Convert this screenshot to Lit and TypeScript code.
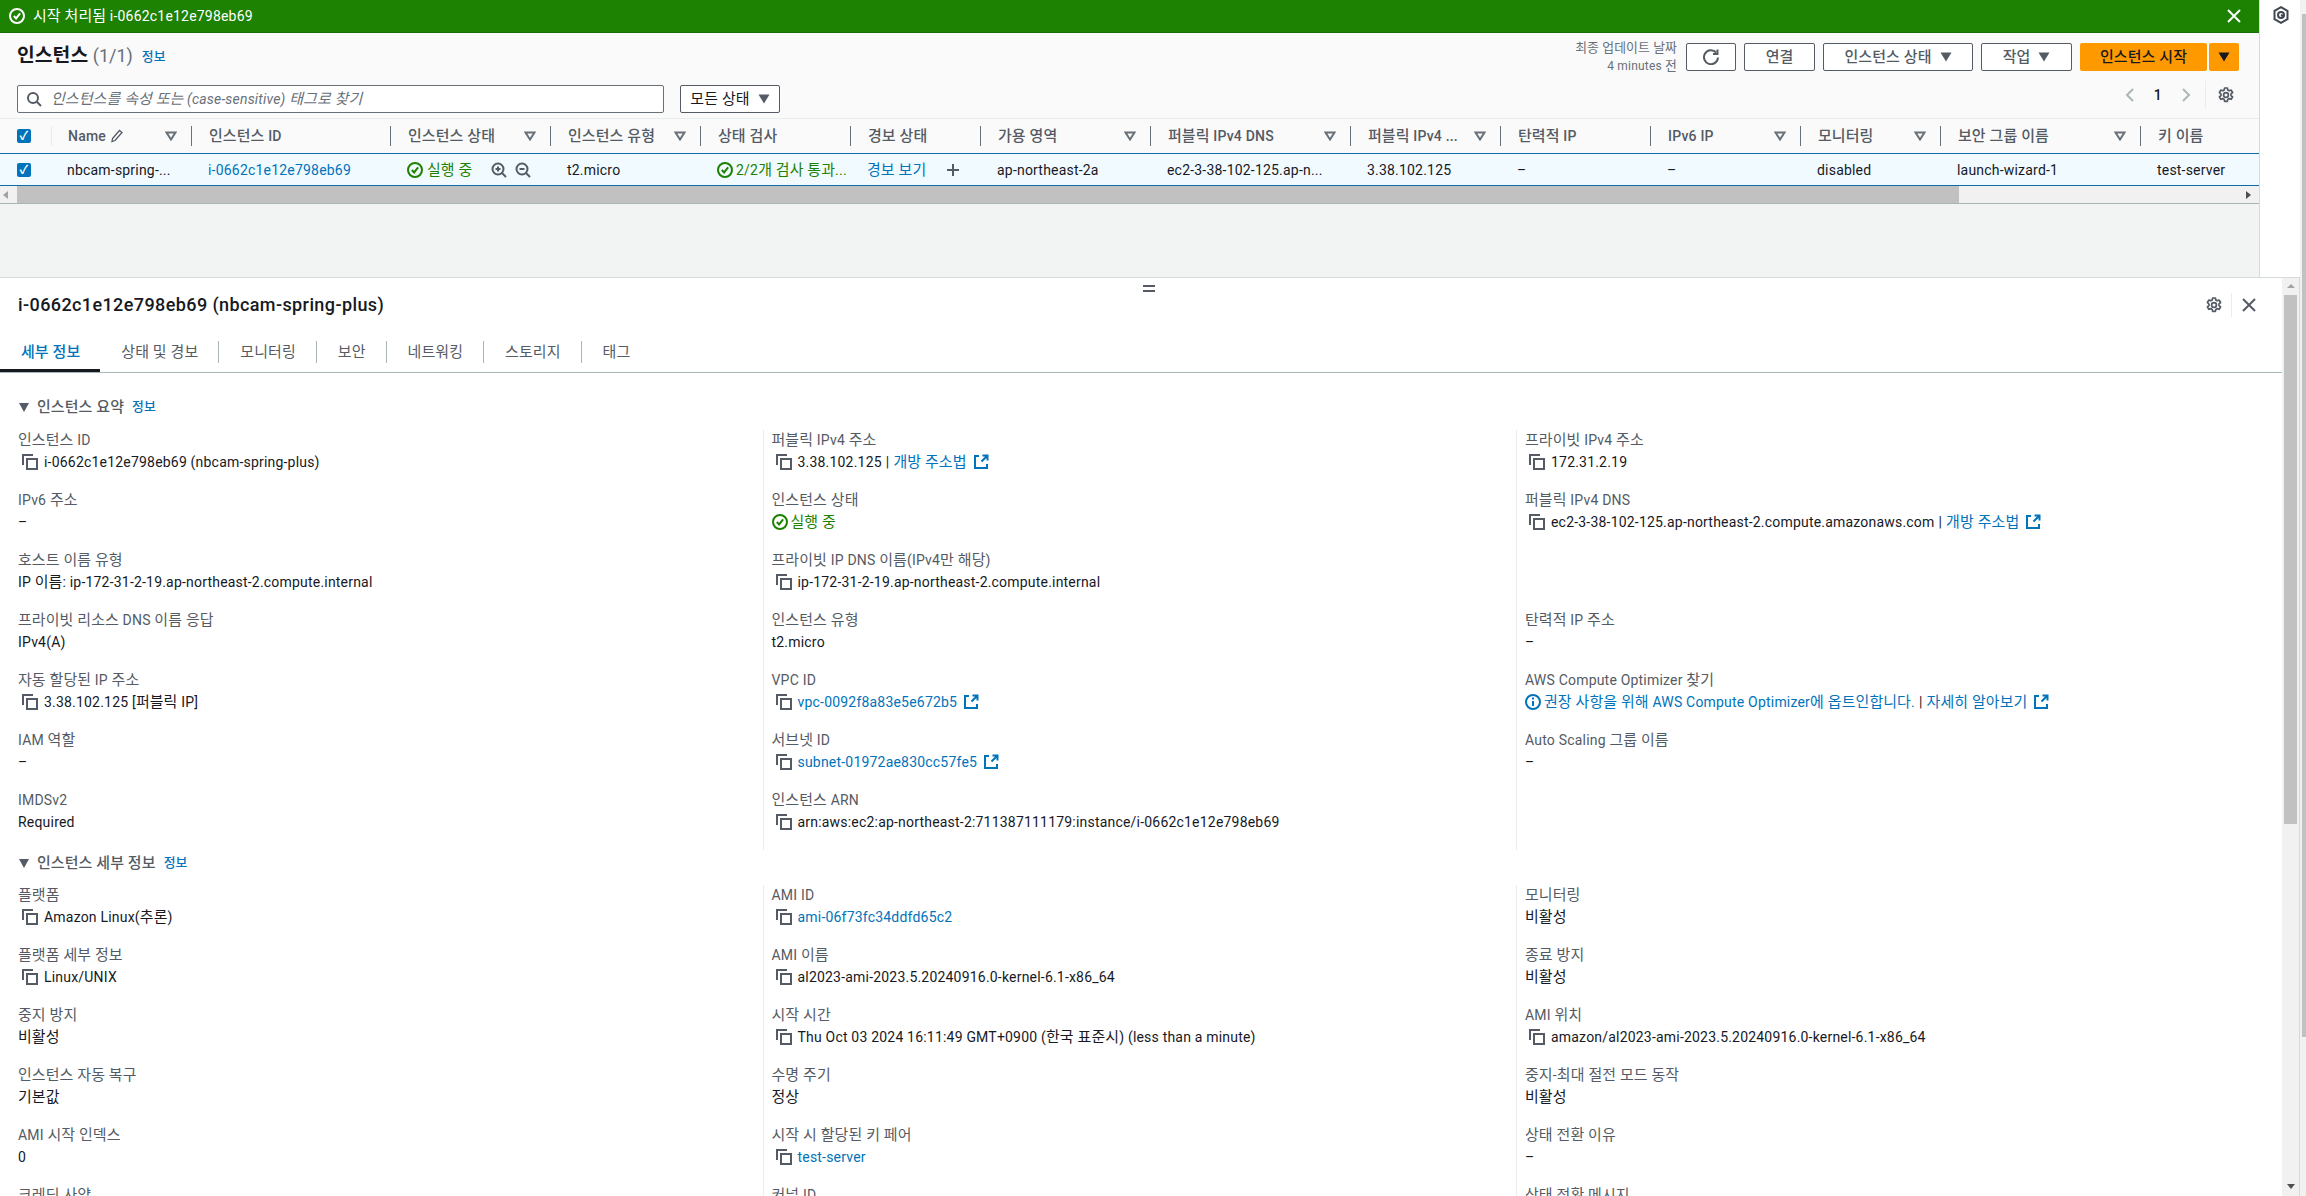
import { LitElement, css, html, svg } from 'lit'
import { customElement } from 'lit/decorators.js'

type Item = { label: string; value?: string; kind?: string; link?: boolean; copy?: boolean; ext?: boolean }

// one column of key/value pairs per entry
const SUMMARY: Item[][] = [
  [
    { label: '인스턴스 ID', value: 'i-0662c1e12e798eb69 (nbcam-spring-plus)', copy: true },
    { label: 'IPv6 주소', value: '–' },
    { label: '호스트 이름 유형', value: 'IP 이름: ip-172-31-2-19.ap-northeast-2.compute.internal' },
    { label: '프라이빗 리소스 DNS 이름 응답', value: 'IPv4(A)' },
    { label: '자동 할당된 IP 주소', value: '3.38.102.125 [퍼블릭 IP]', copy: true },
    { label: 'IAM 역할', value: '–' },
    { label: 'IMDSv2', value: 'Required' },
  ],
  [
    { label: '퍼블릭 IPv4 주소', value: '3.38.102.125', copy: true, kind: 'open' },
    { label: '인스턴스 상태', kind: 'running' },
    { label: '프라이빗 IP DNS 이름(IPv4만 해당)', value: 'ip-172-31-2-19.ap-northeast-2.compute.internal', copy: true },
    { label: '인스턴스 유형', value: 't2.micro' },
    { label: 'VPC ID', value: 'vpc-0092f8a83e5e672b5', copy: true, link: true, ext: true },
    { label: '서브넷 ID', value: 'subnet-01972ae830cc57fe5', copy: true, link: true, ext: true },
    { label: '인스턴스 ARN', value: 'arn:aws:ec2:ap-northeast-2:711387111179:instance/i-0662c1e12e798eb69', copy: true },
  ],
  [
    { label: '프라이빗 IPv4 주소', value: '172.31.2.19', copy: true },
    { label: '퍼블릭 IPv4 DNS', value: 'ec2-3-38-102-125.ap-northeast-2.compute.amazonaws.com', copy: true, kind: 'open' },
    { label: '' },
    { label: '탄력적 IP 주소', value: '–' },
    { label: 'AWS Compute Optimizer 찾기', kind: 'optimizer' },
    { label: 'Auto Scaling 그룹 이름', value: '–' },
  ],
]

const DETAILS: Item[][] = [
  [
    { label: '플랫폼', value: 'Amazon Linux(추론)', copy: true },
    { label: '플랫폼 세부 정보', value: 'Linux/UNIX', copy: true },
    { label: '중지 방지', value: '비활성' },
    { label: '인스턴스 자동 복구', value: '기본값' },
    { label: 'AMI 시작 인덱스', value: '0' },
    { label: '크레딧 사양' },
  ],
  [
    { label: 'AMI ID', value: 'ami-06f73fc34ddfd65c2', copy: true, link: true },
    { label: 'AMI 이름', value: 'al2023-ami-2023.5.20240916.0-kernel-6.1-x86_64', copy: true },
    { label: '시작 시간', value: 'Thu Oct 03 2024 16:11:49 GMT+0900 (한국 표준시) (less than a minute)', copy: true },
    { label: '수명 주기', value: '정상' },
    { label: '시작 시 할당된 키 페어', value: 'test-server', copy: true, link: true },
    { label: '커널 ID' },
  ],
  [
    { label: '모니터링', value: '비활성' },
    { label: '종료 방지', value: '비활성' },
    { label: 'AMI 위치', value: 'amazon/al2023-ami-2023.5.20240916.0-kernel-6.1-x86_64', copy: true },
    { label: '중지-최대 절전 모드 동작', value: '비활성' },
    { label: '상태 전환 이유', value: '–' },
    { label: '상태 전환 메시지' },
  ],
]

const TABS = ['세부 정보', '상태 및 경보', '모니터링', '보안', '네트워킹', '스토리지', '태그']

// hangul is set a little larger than latin, the fallback font in the original runs wide
const ko = (s: string) => s.split(/([\uAC00-\uD7A3]+(?: [\uAC00-\uD7A3]+)*)/).map((p, i) => i % 2 ? html`<span class="ko">${p}</span>` : p)

const check = (size = 16) => html`<svg width=${size} height=${size} viewBox="0 0 16 16" fill="none" stroke="currentColor" stroke-width="2"><circle cx="8" cy="8" r="7"/><path d="M4.8 8l2.3 2.4 4-5"/></svg>`
const copyIcon = html`<svg class="copy" width="16" height="16" viewBox="0 0 16 16" fill="none" stroke="#545b64" stroke-width="2"><path d="M1 11V1h10"/><rect x="5" y="5" width="10" height="10"/></svg>`
const extIcon = html`<svg class="ext" width="16" height="16" viewBox="0 0 16 16" fill="none" stroke="#0073bb" stroke-width="2"><path d="M6 2H2v12h12v-4"/><path d="M8.5 7.5L14 2M9.5 1.5h5v5"/></svg>`
const sortIcon = html`<svg class="sort" width="12" height="10" viewBox="0 0 12 10" fill="none" stroke="#687078" stroke-width="2"><path d="M1.5 1.5h9L6 8.5z"/></svg>`
const caret = (fill = '#545b64') => html`<svg width="12" height="10" viewBox="0 0 12 10"><path d="M0.5 0.5h11L6 9.5z" fill=${fill}/></svg>`
const gearPath = svg`<path d="M6.6 1h2.8l.4 2 1.4.8 2-.7 1.4 2.4-1.6 1.4v1.6l1.6 1.4-1.4 2.4-2-.7-1.4.8-.4 2H6.6l-.4-2-1.4-.8-2 .7-1.4-2.4 1.6-1.4V7.100L1.400 5.500l1.400-2.400 2 .7 1.400-.8z"/><circle cx="8" cy="8" r="2.400"/>`
const gear = html`<svg width="16" height="16" viewBox="0 0 16 16" fill="none" stroke="#545b64" stroke-width="1.700" stroke-linejoin="round">${gearPath}</svg>`
const closeIcon = (color: string) => html`<svg width="14" height="14" viewBox="0 0 14 14" fill="none" stroke=${color} stroke-width="2"><path d="M1 1l12 12M13 1L1 13"/></svg>`

@customElement('app-root')
export class AppRoot extends LitElement {

  renderItem(it: Item) {
    if (!it.label) return html`<div class="item"></div>`
    let body
    if (it.kind === 'running') {
      body = html`<span class="ok">${check()}<span>${ko('실행 중')}</span></span>`
    } else if (it.kind === 'optimizer') {
      body = html`<span class="opt"><svg width="16" height="16" viewBox="0 0 16 16" fill="none" stroke="#0073bb" stroke-width="2"><circle cx="8" cy="8" r="7"/><path d="M8 7v5M8 3.600v2"/></svg><a>${ko('권장 사항을 위해 AWS Compute Optimizer에 옵트인합니다.')}</a><span class="pipe">|</span><a>${ko('자세히 알아보기')}</a>${extIcon}</span>`
    } else if (it.value) {
      body = html`
        ${it.copy ? copyIcon : ''}
        <span class=${it.link ? 'lnk' : ''}>${ko(it.value)}</span>
        ${it.ext ? extIcon : ''}
        ${it.kind === 'open' ? html`<span class="pipe">|</span><a>${ko('개방 주소법')}</a>${extIcon}` : ''}`
    }
    return html`<div class="item"><div class="lbl">${ko(it.label)}</div><div class="val">${body}</div></div>`
  }

  renderGrid(cols: Item[][]) {
    return html`<div class="kv">${cols.map(c => html`<div class="col">${c.map(i => this.renderItem(i))}</div>`)}</div>`
  }

  render() {
    return html`
      <div class="content">
        <div class="top">
          <div class="main">
            <div class="flash">
              <span class="flash-l">${check()}<span>${ko('시작 처리됨')} i-0662c1e12e798eb69</span></span>
              ${closeIcon('#fff')}
            </div>
            <div class="head">
              <div class="title-row">
                <h1>${ko('인스턴스')} <small>(1/1)</small></h1><a class="info">${ko('정보')}</a>
                <div class="spacer"></div>
                <div class="updated">${ko('최종 업데이트 날짜')}<br />4 minutes ${ko('전')}</div>
                <button class="btn refresh"><svg width="16" height="16" viewBox="0 0 16 16" fill="none" stroke="#545b64" stroke-width="2"><path d="M13.200 3.500A7 7 0 1 0 15 8.500"/><path d="M14.500 .5v4.500H10"/></svg></button>
                <button class="btn w-conn">${ko('연결')}</button>
                <button class="btn w-state"><span>${ko('인스턴스 상태')}</span> ${caret()}</button>
                <button class="btn w-act"><span>${ko('작업')}</span> ${caret()}</button>
                <button class="btn primary">${ko('인스턴스 시작')}</button>
                <button class="btn primary split">${caret('#16191f')}</button>
              </div>
              <div class="filter-row">
                <div class="search">
                  <svg width="16" height="16" viewBox="0 0 16 16" fill="none" stroke="#545b64" stroke-width="2"><circle cx="7" cy="7" r="5"/><path d="M10.500 10.500L15 15"/></svg>
                  <span>${ko('인스턴스를 속성 또는')} (case-sensitive) ${ko('태그로 찾기')}</span>
                </div>
                <button class="btn w-all"><span>${ko('모든 상태')}</span> ${caret()}</button>
                <div class="spacer"></div>
                <div class="pager">
                  <svg width="10" height="14" viewBox="0 0 10 14" fill="none" stroke="#aab7b8" stroke-width="2"><path d="M8 1L2 7l6 6"/></svg>
                  <b>1</b>
                  <svg width="10" height="14" viewBox="0 0 10 14" fill="none" stroke="#aab7b8" stroke-width="2"><path d="M2 1l6 6-6 6"/></svg>
                </div>
                <div class="pref">${gear}</div>
              </div>
            </div>
            <div class="table">
              <div class="grid thead">
                <div class="c chk"><span class="box">✓</span></div>
                <div class="c first">Name <svg class="pencil" width="14" height="14" viewBox="0 0 14 14" fill="none" stroke="#545b64" stroke-width="1.300"><path d="M2 12.500l.5-3L9.500 1.500l2.500 2-7 8z"/></svg>${sortIcon}</div>
                <div class="c">${ko('인스턴스 ID')}</div>
                <div class="c">${ko('인스턴스 상태')}${sortIcon}</div>
                <div class="c">${ko('인스턴스 유형')}${sortIcon}</div>
                <div class="c">${ko('상태 검사')}</div>
                <div class="c">${ko('경보 상태')}</div>
                <div class="c">${ko('가용 영역')}${sortIcon}</div>
                <div class="c">${ko('퍼블릭 IPv4 DNS')}${sortIcon}</div>
                <div class="c">${ko('퍼블릭 IPv4 ...')}${sortIcon}</div>
                <div class="c">${ko('탄력적 IP')}</div>
                <div class="c">IPv6 IP${sortIcon}</div>
                <div class="c">${ko('모니터링')}${sortIcon}</div>
                <div class="c">${ko('보안 그룹 이름')}${sortIcon}</div>
                <div class="c">${ko('키 이름')}${sortIcon}</div>
              </div>
              <div class="grid tbody">
                <div class="c chk"><span class="box">✓</span></div>
                <div class="c">nbcam-spring-...</div>
                <div class="c"><a>i-0662c1e12e798eb69</a></div>
                <div class="c"><span class="ok state">${check()}<span>${ko('실행 중')}</span></span>
                  <svg class="zoom" width="40" height="16" viewBox="0 0 40 16" fill="none" stroke="#545b64" stroke-width="2"><circle cx="7" cy="7" r="5.500"/><path d="M11 11l4 4M4.500 7h5M7 4.500v5"/><circle cx="31" cy="7" r="5.500"/><path d="M35 11l4 4M28.500 7h5"/></svg></div>
                <div class="c">t2.micro</div>
                <div class="c"><span class="ok">${check()}<span>2/2${ko('개 검사 통과')}...</span></span></div>
                <div class="c"><a>${ko('경보 보기')}</a><svg class="plus" width="14" height="14" viewBox="0 0 14 14" stroke="#545b64" stroke-width="2"><path d="M7 1v12M1 7h12"/></svg></div>
                <div class="c">ap-northeast-2a</div>
                <div class="c">ec2-3-38-102-125.ap-n...</div>
                <div class="c">3.38.102.125</div>
                <div class="c">–</div>
                <div class="c">–</div>
                <div class="c">disabled</div>
                <div class="c">launch-wizard-1</div>
                <div class="c">test-server</div>
              </div>
              <div class="hscroll">
                <span class="arr-l"></span>
                <div class="hthumb"></div>
                <span class="arr-r"></span>
              </div>
            </div>
            <div class="gap"></div>
          </div>
          <div class="strip">
            <svg width="16" height="18" viewBox="0 0 16 18" fill="none" stroke="#414750" stroke-width="2"><path d="M8 1.200l6.500 3.700v8.200L8 16.800l-6.500-3.700V4.900z"/><circle cx="8" cy="9" r="3" /><path d="M8 9l3 1.500"/></svg>
          </div>
        </div>
        <div class="panel">
          <div class="handle"></div>
          <div class="panel-body">
            <div class="panel-main">
              <div class="panel-head">
                <h2>i-0662c1e12e798eb69 (nbcam-spring-plus)</h2>
                <div class="panel-tools">${gear}<i></i>${closeIcon('#545b64')}</div>
              </div>
              <div class="tabs">
                ${TABS.map((t, i) => html`<div class="tab ${i === 0 ? 'active' : ''}"><div class="tab-t">${ko(t)}</div></div>`)}
              </div>
              <div class="sec"><svg width="10" height="9" viewBox="0 0 10 9"><path d="M0 0h10L5 9z" fill="#545b64"/></svg><div class="sec-t">${ko('인스턴스 요약')}</div><a class="info">${ko('정보')}</a></div>
              ${this.renderGrid(SUMMARY)}
              <div class="sec sec2"><svg width="10" height="9" viewBox="0 0 10 9"><path d="M0 0h10L5 9z" fill="#545b64"/></svg><div class="sec-t">${ko('인스턴스 세부 정보')}</div><a class="info">${ko('정보')}</a></div>
              ${this.renderGrid(DETAILS)}
            </div>
            <div class="vscroll">
              <span class="up"></span>
              <div class="vthumb"></div>
              <span class="down"></span>
            </div>
          </div>
        </div>
      </div>
      <div class="pagebar"><div class="pagethumb"></div></div>
    `
  }

  static styles = css`
    :host {
      display: flex;
      width: 2306px;
      height: 1196px;
      overflow: hidden;
      background: #fff;
      color: #16191f;
      font-family: 'Roboto', 'Noto Sans CJK KR', sans-serif;
      font-size: 14px;
      line-height: 20px;
      letter-spacing: .2px;
    }
    * { box-sizing: border-box; }
    a { color: #0073bb; }
    .ko { font-size: 1.07em; letter-spacing: .1px; }
    .spacer { flex: 1; }
    .content { width: 2300px; display: flex; flex-direction: column; flex: none; }
    .pagebar { width: 6px; padding: 14px 0 0 2px; height: 1196px; background: #f1f1f1; }
    .pagethumb { background: #c1c1c1; height: 1023px; }

    .top { height: 277px; display: flex; flex: none; }
    .main { width: 2260px; display: flex; flex-direction: column; background: #f2f3f3; border-right: 1px solid #d5dbdb; }
    .strip { flex: 1; padding: 6px 0 0 13px; }

    .flash { height: 33px; background: #1d8102; color: #fff; display: flex; align-items: center; justify-content: space-between; padding: 0 18px 0 9px; border-bottom: 1px solid #15700a; }
    .flash-l { display: flex; gap: 8px; align-items: center; font-size: 14px; }
    .head { height: 86px; background: #fafafa; padding: 10px 20px 0 17px; border-bottom: 1px solid #eaeded; }
    .title-row { height: 28px; display: flex; align-items: center; }
    h1 { margin: -2px 0 0; font-size: 18px; font-weight: 700; line-height: 24px; letter-spacing: 0; }
    h1 small { font-size: 18px; font-weight: 400; color: #687078; }
    .info { font-size: 12px; font-weight: 500; margin-left: 8px; }
    .title-row .info { margin-left: 9px; }
    .updated { font-size: 12px; line-height: 17px; color: #687078; text-align: right; margin-right: 9px; }
    .btn { height: 28px; border: 1px solid #545b64; border-radius: 2px; background: #fff; color: #545b64; font: inherit; letter-spacing: inherit; font-weight: 500; display: flex; align-items: center; justify-content: center; gap: 8px; padding: 0; margin-right: 8px; flex: none; }
    .refresh { width: 50px; }
    .w-conn { width: 71px; }
    .w-state { width: 150px; }
    .w-act { width: 91px; }
    .w-all { width: 100px; margin: 0 0 0 16px; color: #16191f; font-weight: 400; }
    .primary { background: #ff9900; border: none; color: #16191f; width: 127px; margin-right: 2px; }
    .split { width: 30px; margin-right: 0; }
    .filter-row { height: 28px; margin-top: 14px; display: flex; align-items: center; }
    .search { width: 647px; height: 28px; background: #fff; border: 1px solid #687078; border-radius: 2px; display: flex; align-items: center; gap: 9px; padding: 0 8px; color: #687078; font-style: italic; }
    .pager { display: flex; align-items: center; gap: 19px; margin-right: 14px; align-self: flex-start; height: 20px; }
    .pager b { font-weight: 500; }
    .pref { height: 28px; margin-top: -4px; align-self: flex-start; padding-left: 12px; border-left: 1px solid #eaeded; display: flex; align-items: center; width: 34px; }

    .table { background: #fff; flex: none; }
    .grid {
      display: grid;
      grid-template-columns: 51px 140px 199px 160px 150px 150px 130px 170px 200px 150px 150px 150px 140px 200px 200px;
      width: 2259px;
      overflow: hidden;
    }
    .thead { height: 34px; background: #fafafa; color: #545b64; font-weight: 500; align-items: center; }
    .thead .c { height: 20px; border-left: 1px solid #687078; padding-left: 17px; position: relative; white-space: nowrap; }
    .thead .c.first { border-left: 1px solid #eaeded; padding-left: 16px; display: flex; align-items: center; gap: 4px; }
    .thead .c.chk { border: none; padding: 0 0 0 17px; display: flex; align-items: center; }
    .sort { position: absolute; right: 14px; top: 5px; }
    .tbody { height: 33px; background: #f1faff; border-top: 1px solid #0f6cab; border-bottom: 1px solid #0f6cab; align-items: center; }
    .tbody .c { padding-left: 17px; white-space: nowrap; display: flex; align-items: center; }
    .tbody .c:nth-child(2) { padding-left: 16px; }
    .tbody .c.chk { padding: 0 0 0 17px; }
    .box { width: 14px; height: 14px; background: #0073bb; color: #fff; font-size: 12px; font-weight: 700; line-height: 14px; text-align: center; border-radius: 2px; display: block; }
    .zoom { margin-left: 19px; flex: none; }
    .plus { margin-left: 20px; flex: none; }
    .hscroll { height: 18px; background: #f1f1f1; display: flex; align-items: center; border-bottom: 1px solid #aab7b8; }
    .arr-l { width: 0; height: 0; margin: 0 9px 0 3px; border: 4px solid transparent; border-left: 0; border-right: 5px solid #a3a3a3; }
    .hthumb { width: 1942px; height: 17px; background: #c1c1c1; }
    .arr-r { width: 0; height: 0; margin-left: auto; margin-right: 8px; border: 4px solid transparent; border-right: 0; border-left: 5px solid #505050; }
    .gap { flex: 1; }

    .ok { color: #1d8102; display: inline-flex; align-items: center; gap: 3px; }
    .state { gap: 4px; }
    .ok svg { flex: none; }

    .panel { height: 919px; flex: none; border-top: 1px solid #d5dbdb; border-right: 1px solid #d5dbdb; position: relative; overflow: hidden; }
    .handle { position: absolute; left: 1143px; top: 7px; width: 12px; height: 7px; border-top: 2px solid #545b64; border-bottom: 2px solid #545b64; }
    .panel-body { display: flex; height: 100%; }
    .panel-main { width: 2282px; flex: none; overflow: hidden; }
    .vscroll { width: 17px; background: #f1f1f1; display: flex; flex-direction: column; align-items: center; padding-top: 6px; }
    .up { width: 0; height: 0; border: 4px solid transparent; border-top: 0; border-bottom: 4px solid #a3a3a3; }
    .vthumb { width: 13px; height: 529px; background: #c1c1c1; margin-top: 7px; }
    .down { width: 0; height: 0; margin-top: auto; margin-bottom: 7px; border: 4px solid transparent; border-bottom: 0; border-top: 5px solid #505050; }

    .panel-head { height: 62px; padding: 14px 26px 0 18px; display: flex; justify-content: space-between; align-items: flex-start; }
    h2 { margin: 0; font-size: 18px; font-weight: 500; line-height: 26px; letter-spacing: .4px; }
    .panel-tools { display: flex; align-items: center; height: 26px; }
    .panel-tools i { display: block; width: 1px; height: 24px; background: #eaeded; margin: 0 10px 0 9px; }
    .tabs { height: 33px; display: flex; border-bottom: 1px solid #aab7b8; color: #545b64; }
    .tab { height: 32px; padding-top: 1px; flex: none; }
    .tab-t { height: 22px; line-height: 22px; padding: 0 20px 0 21px; border-right: 1px solid #aab7b8; white-space: nowrap; }
    .tab:last-child .tab-t { border-right: none; }
    .tab.active { color: #0073bb; font-weight: 500; border-bottom: 3px solid #16191f; }
    .tab.active .tab-t { border-right: none; }

    .sec { display: flex; align-items: center; margin: 24px 0 0 19px; height: 20px; color: #545b64; font-weight: 500; }
    .sec-t { margin-left: 8px; }
    .sec2 { margin-top: 3px; }
    .kv { display: grid; grid-template-columns: repeat(3, 753.5px); margin: 13px 0 0 9px; }
    .sec2 + .kv { margin-top: 12px; }
    .col { padding-left: 8px; border-left: 1px solid #eaeded; }
    .col:first-child { border-left-color: transparent; }
    .item { height: 60px; }
    .lbl { color: #545b64; height: 20px; white-space: nowrap; }
    .val { display: flex; align-items: center; height: 22px; margin-top: 1px; white-space: nowrap; }
    .val a, .lnk { color: #0073bb; }
    .copy { margin: 0 6px 0 4px; flex: none; }
    .ext { margin-left: 6px; flex: none; }
    .pipe { margin: 0 4px; }
    .opt { display: flex; align-items: center; }
    .opt svg:first-child { margin-right: 3px; }
  `
}
